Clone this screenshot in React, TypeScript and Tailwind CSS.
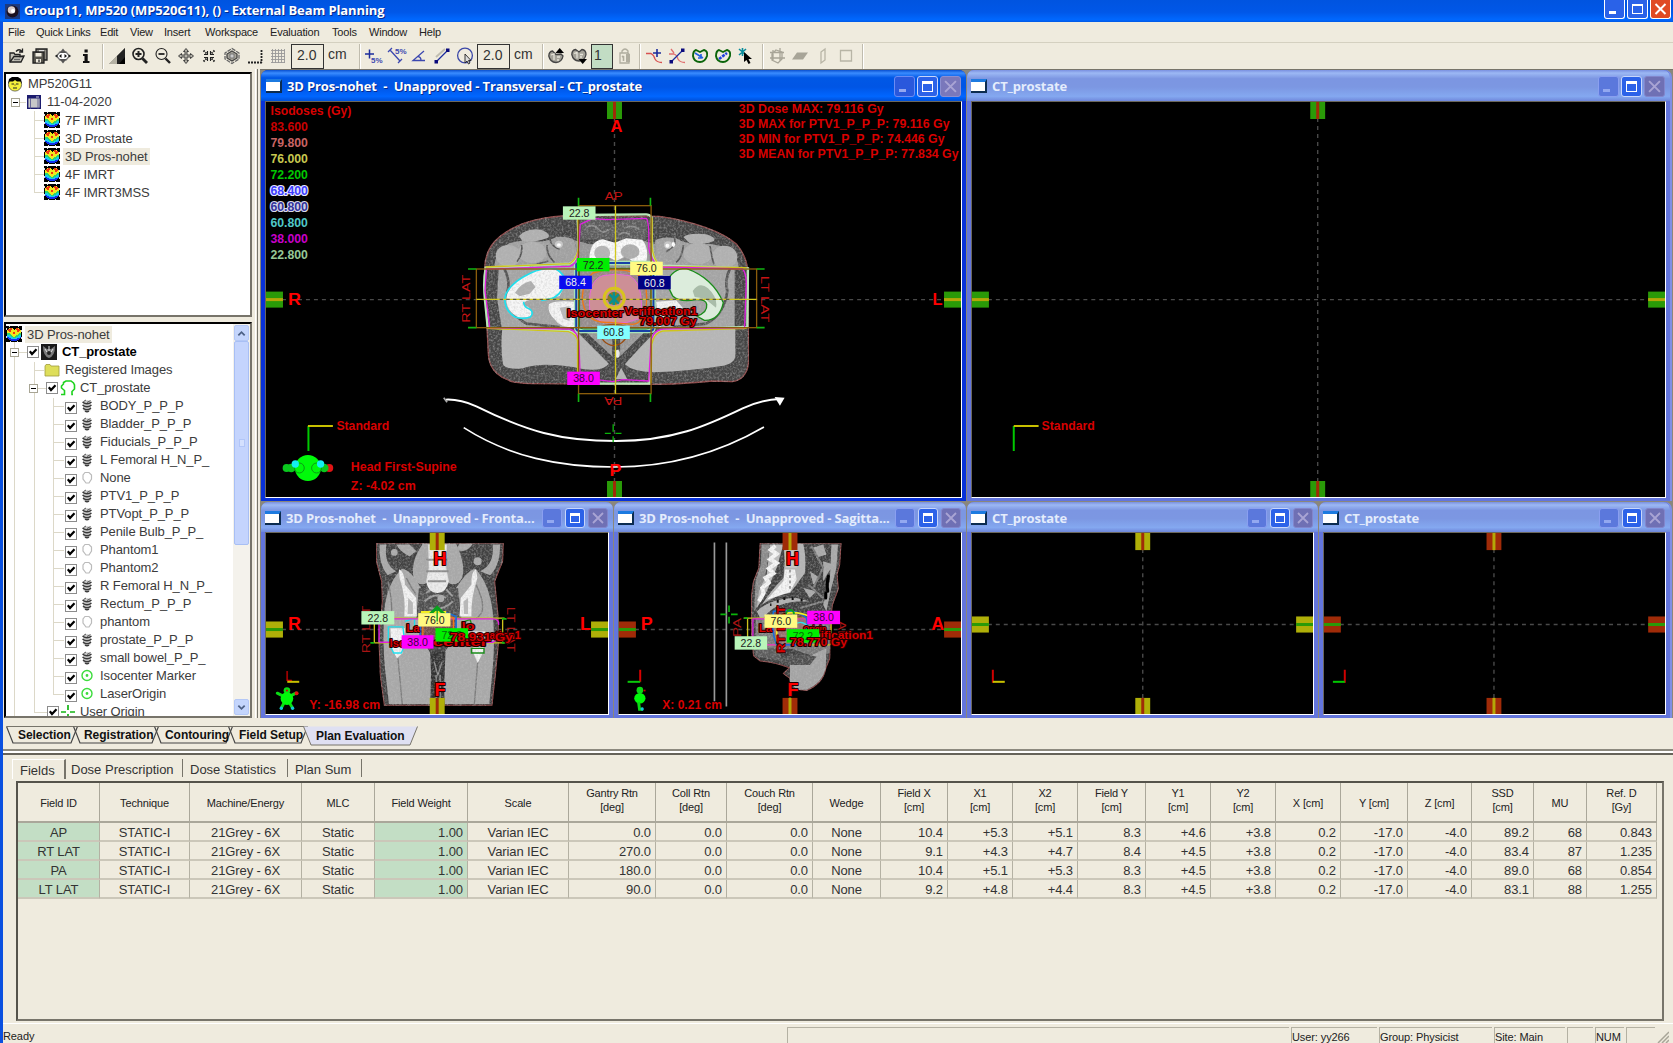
import React from "react";

/* ---------- helpers for the drawings ---------- */

type TProps = { x: number; y: number; t: string; w?: number; s?: number; fill?: string; bold?: boolean; halo?: string; hw?: number; transform?: string };

function T({ x, y, t, w, s = 12, fill = "#d80000", bold = true, halo, hw = 2, transform }: TProps) {
  return (
    <text
      x={x}
      y={y}
      fontSize={s}
      fill={fill}
      fontWeight={bold ? 700 : 400}
      textLength={w}
      lengthAdjust="spacingAndGlyphs"
      stroke={halo}
      strokeWidth={halo ? hw : undefined}
      paintOrder="stroke"
      strokeLinejoin="round"
      transform={transform}
    >
      {t}
    </text>
  );
}

function Tag({ x, y, w = 98, h = 40, bg, fg = "#222", t }: { x: number; y: number; w?: number; h?: number; bg: string; fg?: string; t: string }) {
  return (
    <g>
      <rect x={x} y={y} width={w} height={h} fill={bg} />
      <text x={x + w / 2} y={y + h / 2 + 12} fontSize={34} fill={fg} textAnchor="middle" textLength={62} lengthAdjust="spacingAndGlyphs">
        {t}
      </text>
    </g>
  );
}

/* Shared texture for scanned tissue: `grain` adds fine noise inside a shape, `soft` rounds off tissue edges. */
function TissueFilters() {
  return (
    <defs>
      <filter id="grain" x="0" y="0" width="1" height="1" colorInterpolationFilters="sRGB">
        <feTurbulence type="fractalNoise" baseFrequency="0.16" numOctaves="2" seed="4" result="n" />
        <feColorMatrix in="n" type="matrix" values="0 0 0 0 0.75  0 0 0 0 0.75  0 0 0 0 0.75  1.1 0 0 0 -0.45" result="g" />
        <feComposite in="g" in2="SourceAlpha" operator="in" result="c" />
        <feMerge>
          <feMergeNode in="SourceGraphic" />
          <feMergeNode in="c" />
        </feMerge>
      </filter>
      <filter id="soft">
        <feGaussianBlur stdDeviation="1.8" />
      </filter>
    </defs>
  );
}

const GREEN = "#2a9a08";
const YELLOW = "#afaf08";
const RED = "#a02b08";

type Box = { l: number; t: number; r: number; b: number; cx: number; cy: number };

function Guides({ l, t, r, b, cx, cy }: Box) {
  return (
    <g stroke="#4a4a4a" strokeWidth={1.4} strokeDasharray="4 4">
      <line x1={l} x2={r} y1={cy} y2={cy} />
      <line x1={cx} x2={cx} y1={t} y2={b} />
    </g>
  );
}

function Marks({ l, t, r, b, cx, cy, outer, vIn, hIn }: Box & { outer: string; vIn: string; hIn: string }) {
  return (
    <g>
      <rect x={l} y={cy - 8} width={17} height={16} fill={outer} />
      <rect x={l} y={cy - 1.5} width={17} height={3} fill={hIn} />
      <rect x={r - 17} y={cy - 8} width={17} height={16} fill={outer} />
      <rect x={r - 17} y={cy - 1.5} width={17} height={3} fill={hIn} />
      <rect x={cx - 7.5} y={t} width={15} height={17} fill={outer} />
      <rect x={cx - 1.5} y={t} width={3} height={17} fill={vIn} />
      <rect x={cx - 7.5} y={b - 16} width={15} height={16} fill={outer} />
      <rect x={cx - 1.5} y={b - 16} width={3} height={16} fill={vIn} />
    </g>
  );
}

/* ---------- viewports ---------- */

function Transversal() {
  const box = { l: 266, t: 101, r: 962, b: 496, cx: 615, cy: 298.6 };
  const doses: [string, string, string?][] = [
    ["83.600", "#c80000"],
    ["79.800", "#c86464"],
    ["76.000", "#c8c850"],
    ["72.200", "#00c800"],
    ["68.400", "#3c3cff", "#e8e8ff"],
    ["60.800", "#32329b", "#d8d8e8"],
    ["60.800", "#50c8c8"],
    ["38.000", "#c800c8"],
    ["22.800", "#96c896"],
  ];
  return (
    <svg className="block h-full w-full" viewBox="266 101 696 395" preserveAspectRatio="none" fontFamily="Liberation Sans, Arial, sans-serif">
      <TissueFilters />
      <Guides {...box} />
      <g transform="translate(460 180) scale(.33333)">
        <g filter="url(#grain)">
          {/* body */}
          <path d="M75 262C76 200 112 158 190 128C250 106 310 104 340 103L600 106C700 120 790 152 832 190C862 224 868 262 868 300V540C866 582 842 600 818 602L760 600C700 606 640 612 540 610L220 608C190 608 180 606 168 604C128 596 88 572 86 520L75 300Z" fill="#464646" stroke="#8c4848" strokeWidth={4} />
          <g filter="url(#soft)">
            {/* muscle */}
            <path d="M104 262Q104 210 150 186L200 176Q250 190 290 168Q330 165 345 178L360 260H110ZM838 262Q838 222 800 198L750 188Q690 196 650 172Q610 165 588 178L578 260H836Z" fill="#a0a0a0" />
            <g fill="#b0b0b0">
              <path d="M178 165Q200 140 245 146Q275 158 266 170Q220 186 188 180Z" />
              <path d="M672 168Q690 154 740 160Q770 168 764 180Q720 196 690 186Z" />
              <ellipse cx="146" cy="224" rx="38" ry="32" />
              <ellipse cx="218" cy="214" rx="42" ry="32" />
              <ellipse cx="796" cy="228" rx="38" ry="34" />
              <ellipse cx="716" cy="218" rx="44" ry="32" />
            </g>
            <path d="M118 256H350L360 440H126L112 350Z" fill="#a4a4a4" />
            <path d="M580 256H826V440H570Z" fill="#a4a4a4" />
            <path d="M345 178L390 190L548 178L590 190L585 262L356 262Z" fill="#969696" />
            <path d="M362 120Q420 100 460 130Q520 104 566 120L560 176H366Z" fill="#5c5c5c" />
            <path d="M380 140q20-14 36 4t30 2M500 140q20-10 40 6M480 160q14-10 30 0" fill="none" stroke="#8a8a8a" strokeWidth={5} />
            <g fill="none" stroke="#555" strokeWidth={5}>
              <path d="M186 192Q190 220 172 242M262 192Q262 225 285 244M210 256L266 240M752 195Q756 225 764 250M672 192Q668 230 650 244M276 150Q260 190 300 205M640 160Q660 190 620 212" />
              <path d="M134 262Q152 300 144 330Q138 390 200 428L300 438" strokeWidth={8} />
              <path d="M812 262Q795 300 804 330Q795 400 740 428L640 438" strokeWidth={8} />
            </g>
            {/* gluteal muscles */}
            <path d="M128 440L350 450Q400 500 448 548Q430 572 370 564Q250 540 190 562Q140 568 130 550Q122 500 128 440Z" fill="#b6b6b6" />
            <path d="M828 438L590 450Q540 500 496 550Q520 572 580 574Q700 570 780 556Q830 550 828 520Z" fill="#b6b6b6" />
            <path d="M352 440L462 545M583 440L482 545M470 540V600" stroke="#444" strokeWidth={13} fill="none" />
            <path d="M372 446L458 526V470L420 440ZM563 446L482 526V470L520 440Z" fill="#989898" />
            <path d="M485 560l-16 34h34z" fill="#b4b4b4" />
            <path d="M355 265H585V450H355Z" fill="#968c8c" />
          </g>
          {/* bones */}
          <g filter="url(#soft)">
            <path d="M390 250Q385 180 430 175L466 185L500 172L548 176Q570 200 560 245L535 255L500 225L470 240L440 225L415 255Z" fill="#fafafa" />
            <ellipse cx="428" cy="216" rx="24" ry="22" fill="#b4b4b4" />
            <ellipse cx="512" cy="212" rx="28" ry="22" fill="#acacac" />
            <path d="M140 355Q140 310 220 272Q260 258 290 268Q315 280 320 305L300 345L250 358Q190 352 192 372Q222 380 215 405Q200 412 176 410Q140 390 140 355Z" fill="#f6f6f6" />
            <path d="M166 335Q184 306 214 300L228 318L210 338L180 346Z" fill="#aeaeae" />
            <path d="M268 370Q280 358 345 362V440Q300 440 285 415Q262 395 268 370Z" fill="#f4f4f4" />
            <path d="M300 380L330 376V420L312 414Z" fill="#b8b8b8" />
            <path d="M590 362L650 358L670 380L640 400L600 440Z" fill="#f4f4f4" />
            <path d="M612 380L640 376L620 404Z" fill="#b8b8b8" />
            <ellipse cx="298" cy="190" rx="12" ry="11" fill="#c8c8c8" />
            <ellipse cx="298" cy="192" rx="7" ry="5" fill="#fff" />
            <ellipse cx="626" cy="192" rx="12" ry="11" fill="#c8c8c8" />
            <ellipse cx="624" cy="194" rx="6" ry="6" fill="#fff" />
            <ellipse cx="642" cy="190" rx="5" ry="8" fill="#fff" />
            <ellipse cx="474" cy="518" rx="7" ry="12" fill="#eee" />
          </g>
        </g>
        <path d="M620 305Q640 262 680 262Q760 290 792 365Q780 420 735 418L712 405Q745 395 742 370Q740 355 710 356Q660 365 640 345Z" fill="#dcecdc" stroke="#1a8c1a" strokeWidth={4} />
        <path d="M700 330Q720 300 746 322Q776 350 770 380L745 360Q740 352 706 348Z" fill="#a9bca9" filter="url(#soft)" />
        <path d="M135 355Q140 310 215 275Q255 258 290 264Q316 280 318 305Q300 350 270 354L245 358M192 362Q192 378 210 384Q225 394 212 408Q190 416 166 408Q138 392 135 355" fill="none" stroke="#1fe0ee" strokeWidth={5} />
        {/* target */}
        <path d="M392 400Q380 300 430 284Q470 275 510 284Q540 300 545 350L548 410L500 425H430Z" fill="#cf969f" stroke="#ee66ee" strokeWidth={3} />
        <path d="M368 350Q370 300 400 276Q465 255 530 276Q562 300 562 350Q560 425 520 430L450 424Q375 430 368 350Z" fill="#c0606022" stroke="#f07818" strokeWidth={4} />
        <path d="M415 440Q460 420 510 440Q500 492 462 494Q425 490 415 440Z" fill="none" stroke="#9a4c10" strokeWidth={4} />
        {/* isodose lines */}
        <path d="M350 250Q350 246 362 246H570Q582 246 582 256V440Q582 450 570 450H362Q350 450 350 440Z" fill="none" stroke="#a8e4b8" strokeWidth={14} />
        <path d="M350 250Q350 246 362 246H570Q582 246 582 256V440Q582 450 570 450H362Q350 450 350 440Z" fill="none" stroke="#1840a8" strokeWidth={6} />
        <path d="M360 262H574V438Q570 444 560 444H372Q360 444 360 436Z" fill="none" stroke="#0a8a30" strokeWidth={3} />
        <path d="M354 102L358 200Q352 240 330 248L78 260Q70 300 76 360L84 440L330 450Q352 460 356 480V608L570 608L576 480Q580 452 610 448L864 438L866 262L610 254Q582 250 578 200L576 108Q570 100 560 100Z" fill="none" stroke="#b8e8b8" strokeWidth={7} />
        <path d="M355 110L357 200Q352 236 330 248L78 258M82 442L326 452Q350 458 354 480V606M578 110V200Q584 248 610 256L862 260M862 442L610 450Q584 454 577 490L575 606" fill="none" stroke="#cfc31c" strokeWidth={4} />
        <path d="M362 130L400 112L440 116L560 112Q570 120 568 200Q576 250 610 258L850 264Q864 280 860 330L856 440L610 444Q576 450 574 490L568 600L490 596L460 602L362 590L358 480Q352 450 330 444L90 440L84 390L76 330L80 264L330 256Q356 250 358 200Z" fill="none" stroke="#e020e0" strokeWidth={4} />
        {/* beam apertures */}
        <g fill="none" stroke="#8a5c0c" strokeWidth={4}>
          <rect x="357" y="74" width="218" height="564" />
          <rect x="50" y="264" width="842" height="176" />
        </g>
        <path d="M468 74V638M50 355H892" stroke="#d2c81e" strokeWidth={4} fill="none" />
        <path d="M357 50V74M573 50V74M357 638V663M573 638V663M25 264H50M25 440H50M892 264H916M892 440H916" stroke="#12b412" strokeWidth={5} />
        <path d="M120 355H820" stroke="#444" strokeWidth={3} strokeDasharray="10 10" />
        {/* isocenter */}
        <circle cx="464" cy="352" r="30" fill="none" stroke="#d8c31e" strokeWidth={9} />
        <circle cx="464" cy="352" r="20" fill="#8a7a20" />
        <path d="M450 340l28 28M478 340l-28 28M463 334v38" stroke="#0a9090" strokeWidth={7} />
        <T x={436} y={58} t="AP" w={54} s={33} bold={false} fill="#c81414" />
        <g transform="rotate(180 462 660)">
          <T x={436} y={671} t="PA" w={54} s={33} bold={false} fill="#c81414" />
        </g>
        <T x={0} y={0} t="RT LAT" w={144} s={34} bold={false} fill="#c81414" transform="translate(32 425) rotate(-90)" />
        <T x={0} y={0} t="LT LAT" w={140} s={34} bold={false} fill="#c81414" transform="translate(904 284) rotate(90)" />
        <T x={322} y={407} t="Isocenter" w={170} s={34} halo="#200" hw={6} />
        <T x={494} y={402} t="Verification1" w={220} s={34} halo="#200" hw={6} />
        <T x={540} y={432} t="79.007 Gy" w={172} s={34} halo="#200" hw={6} />
        <Tag x={310} y={76} bg="#b9f5b9" t="22.8" />
        <Tag x={352} y={231} bg="#00ee00" t="72.2" />
        <Tag x={512} y={242} bg="#fffa82" t="76.0" />
        <Tag x={299} y={284} bg="#0a0af0" fg="#eee" t="68.4" />
        <Tag x={536} y={285} bg="#000082" fg="#eee" t="60.8" />
        <Tag x={413} y={434} bg="#82ffff" t="60.8" />
        <Tag x={323} y={572} bg="#ff00ff" fg="#400040" t="38.0" />
        {/* couch */}
        <g fill="none" stroke="#fff" strokeWidth={6}>
          <path d="M-42 656Q0 654 50 676C200 750 300 780 470 780C640 780 740 735 850 682Q910 655 962 654" />
          <path d="M12 740C150 828 300 858 465 858C640 858 790 810 914 738" strokeWidth={5} />
        </g>
        <path d="M946 648L976 650L962 674Z" fill="#fff" />
        <path d="M-48 650l10 14" stroke="#aaa" strokeWidth={5} />
        <path d="M461 730V752M461 766V784M436 757H454M468 757H486" stroke="#0ab40a" strokeWidth={4} />
      </g>
      <Marks {...box} outer={GREEN} vIn={RED} hIn="#b4a808" />
      <T x={611} y={131} t="A" w={12} s={17} fill="#f00" />
      <T x={610} y={475.5} t="P" w={12} s={17} fill="#f00" />
      <T x={288} y={304} t="R" w={13} s={17} fill="#f00" />
      <T x={933.5} y={304} t="L" w={10} s={17} fill="#f00" />
      <T x={270.5} y={114.5} t="Isodoses (Gy)" w={81} s={12} />
      {doses.map(([v, c, h], i) => (
        <T key={i} x={270.5} y={130.5 + i * 16} t={v} w={37.5} s={12} fill={c} halo={h} hw={2.2} />
      ))}
      <T x={739.5} y={112.5} t="3D Dose MAX: 79.116 Gy" w={145} s={12} />
      <T x={739.5} y={127.5} t="3D MAX for PTV1_P_P_P: 79.116 Gy" w={211} s={12} />
      <T x={739.5} y={142.5} t="3D MIN for PTV1_P_P_P: 74.446 Gy" w={206} s={12} />
      <T x={739.5} y={157.5} t="3D MEAN for PTV1_P_P_P: 77.834 Gy" w={220} s={12} />
      <path d="M308.5 450V425" stroke="#00c800" strokeWidth={2} />
      <path d="M308 425H333" stroke="#c8c000" strokeWidth={2} />
      <T x={336.5} y={429} t="Standard" w={53} s={12} />
      <T x={351} y={470} t="Head First-Supine" w={106} s={12} />
      <T x={351} y={489} t="Z: -4.02 cm" w={65} s={12} />
      <g transform="translate(260 90) scale(.33333)">
        <circle cx="80" cy="1131" r="12" fill="#0ac81e" />
        <circle cx="94" cy="1131" r="13" fill="#0ac81e" />
        <circle cx="208" cy="1131" r="12" fill="#e01414" />
        <circle cx="193" cy="1131" r="13" fill="#0ac81e" />
        <circle cx="144" cy="1131" r="39" fill="#00fa0a" />
        <circle cx="118" cy="1131" r="15" fill="none" stroke="#0a9a14" strokeWidth={3} />
        <circle cx="170" cy="1131" r="15" fill="none" stroke="#0a9a14" strokeWidth={3} />
        <circle cx="106" cy="1119" r="11" fill="#14f0f0" />
        <circle cx="182" cy="1119" r="11" fill="#14f0f0" />
      </g>
    </svg>
  );
}

function Frontal() {
  const box = { l: 266, t: 532, r: 609, b: 712, cx: 437.7, cy: 628 };
  return (
    <svg className="block h-full w-full" viewBox="266 532 343 180" preserveAspectRatio="none" fontFamily="Liberation Sans, Arial, sans-serif">
      <Guides {...box} />
      <g transform="translate(260 500) scale(.33333)">
        <g filter="url(#grain)">
          <path d="M350 126H732L730 180L706 240L716 340L718 420L708 520L698 610H374L362 520L358 420L368 300L366 240L350 180Z" fill="#424242" stroke="#8c4848" strokeWidth={3} />
          <g filter="url(#soft)">
            <g fill="#a8a8a8">
              <path d="M360 130H380Q372 190 410 210L384 222Q356 190 360 130Z" />
              <path d="M722 130H700Q706 190 662 210L692 222Q724 190 722 130Z" />
              <path d="M490 128H590Q620 190 608 230Q590 262 560 240H510Q480 262 462 230Q452 180 490 128Z" />
              <path d="M425 204Q380 250 374 330Q368 420 376 500L388 606H512L516 460L480 400L484 260Q450 200 425 204Z" />
              <path d="M650 204Q690 250 700 330Q708 420 700 500L690 606H556L550 460L590 400L590 260Q630 200 650 204Z" />
              <path d="M410 130H450L470 150L450 166Q420 150 410 130ZM640 128H600L590 145Q620 160 640 128Z" />
            </g>
            <path d="M478 260L596 260L606 350H470Z" fill="#505050" />
            <g fill="none" stroke="#9a9a9a" strokeWidth={6}>
              <path d="M495 300Q530 270 560 290M510 320Q550 330 580 300M500 275l20-15M560 265l20 20" />
            </g>
            <circle cx="544" cy="292" r="10" fill="#aaa" />
            <path d="M415 470L428 606M655 480L645 606M440 230Q455 260 470 280M640 250Q620 270 610 290M650 250Q690 330 650 350M385 240Q400 300 395 350" stroke="#7c7c7c" strokeWidth={4} fill="none" />
            <path d="M512 450H558L552 606H518Z" fill="#303030" />
            <path d="M524 480L535 520L548 480M530 520V600M542 520V600" stroke="#8a8a8a" strokeWidth={4} fill="none" />
            <path d="M506 130H562L560 200L568 240Q560 275 535 275Q505 275 500 240L508 200Z" fill="#ececec" />
            <path d="M500 176H565M500 210H568M505 240H560" stroke="#8c8c8c" strokeWidth={6} />
            <path d="M418 204Q435 210 436 250L470 290L472 345H434Q440 290 420 230Z" fill="#f2f2f2" />
            <path d="M650 204Q635 210 636 250L604 290L600 345H636Q634 290 654 230Z" fill="#f2f2f2" />
            <path d="M446 290L460 304V338H444ZM612 300L626 290V338H614Z" fill="#b8b8b8" />
            <path d="M392 380H436L428 455L412 470L396 440Z" fill="#f4f4f4" />
            <path d="M640 390H678L672 450L655 484L640 450Z" fill="#f4f4f4" />
            <circle cx="404" cy="154" r="10" fill="#aaa" />
            <circle cx="655" cy="180" r="12" fill="#aaa" />
          </g>
        </g>
        <path d="M386 376H430L436 430L425 454H402L386 420ZM436 360L465 350V380" fill="none" stroke="#1fe0ee" strokeWidth={4} />
        <path d="M612 362l20-8 6 20-26 8zM636 440H674V454H636Z" fill="none" stroke="#1a8c1a" strokeWidth={4} />
        <path d="M344 350H736M344 424H736M344 350V424M730 350V424" stroke="#cfc31c" strokeWidth={4} fill="none" />
        <path d="M360 352H700Q720 352 718 370M360 422H700L722 410M358 352V422" stroke="#e020e0" strokeWidth={4} fill="none" />
        <path d="M332 352H344M332 424H344M728 352H742M728 424H742" stroke="#12b412" strokeWidth={5} />
        <path d="M482 420V345Q540 320 590 345V420Q540 440 482 420Z" stroke="#1870d8" strokeWidth={5} fill="#c8606055" />
        <path d="M490 410V350Q540 335 582 350V410Q540 430 490 410Z" stroke="#f07818" strokeWidth={4} fill="none" />
        <path d="M484 332H560M560 430H600" stroke="#f4ee20" strokeWidth={6} />
        <path d="M510 340L533 318L556 340" stroke="#0aa01e" strokeWidth={9} fill="none" />
        <T x={0} y={0} t="RT LAT" w={142} s={34} bold={false} fill="#a81414" transform="translate(330 455) rotate(-90)" />
        <T x={0} y={0} t="LT LAT" w={136} s={34} bold={false} fill="#a81414" transform="translate(744 316) rotate(90)" />
        <T x={440} y={390} t="La" w={40} s={34} halo="#200" hw={6} />
        <T x={606} y={386} t="lo" w={40} s={34} halo="#200" hw={6} />
        <T x={390} y={435} t="Iso" w={48} s={34} halo="#200" hw={6} />
        <T x={520} y={434} t="center" w={165} s={30} halo="#200" hw={6} />
        <Tag x={528} y={380} bg="#00ee00" fg="#0a6a0a" t="72.2" />
        <T x={690} y={412} t="ation1" w={94} s={32} halo="#200" hw={6} />
        <T x={572} y={418} t="78.931 Gy" w={188} s={34} halo="#300" hw={6} />
        <Tag x={305} y={329} w={99} bg="#b9f5b9" t="22.8" />
        <Tag x={476} y={335} w={97} bg="#fffa82" t="76.0" />
        <Tag x={426} y={401} w={96} bg="#ff00ff" fg="#400040" t="38.0" />
        <path d="M533 316V360" stroke="#0aa01e" strokeWidth={4} />
        <T x={76} y={538} t="L" w={20} s={42} bold={false} fill="#d80000" />
        <path d="M82 540H118" stroke="#c8c000" strokeWidth={6} />
        <path d="M52 574L80 588L108 574M80 588L64 618M80 588L98 618" stroke="#0adc14" strokeWidth={9} fill="none" strokeLinecap="round" />
        <circle cx="81" cy="566" r="10" fill="#0adc14" />
        <circle cx="81" cy="566" r="3" fill="#c00" />
        <circle cx="81" cy="590" r="19" fill="#00fa0a" />
        <circle cx="110" cy="574" r="6" fill="#e01414" />
        <circle cx="64" cy="619" r="5" fill="#14c8d8" />
        <circle cx="98" cy="619" r="5" fill="#14c8d8" />
      </g>
      <Marks {...box} outer={YELLOW} vIn={RED} hIn={GREEN} />
      <T x={434} y={563.5} t="H" w={13} s={18} fill="#f00" halo="#200" />
      <T x={435} y={694} t="F" w={11} s={18} fill="#f00" halo="#200" />
      <T x={288} y={628.5} t="R" w={13} s={18} fill="#f00" />
      <T x={581} y={628.5} t="L" w={11} s={18} fill="#f00" />
      <T x={309.5} y={707} t="Y: -16.98 cm" w={71} s={12} />
    </svg>
  );
}

function Sagittal() {
  const box = { l: 618, t: 532, r: 962, b: 712, cx: 790, cy: 628 };
  return (
    <svg className="block h-full w-full" viewBox="618 532 344 180" preserveAspectRatio="none" fontFamily="Liberation Sans, Arial, sans-serif">
      <Guides {...box} />
      <g transform="translate(610 500) scale(.33333)">
        <path d="M312 124V598M348 124V614" stroke="#9a9a9a" strokeWidth={5} />
        <g filter="url(#grain)">
          <path d="M450 126H694L690 190L682 220L686 262L668 310L662 360L660 470L648 500Q640 545 590 566L545 560L540 530L520 515L538 498Q490 480 450 478L430 462L424 400V280L430 240L446 200Z" fill="#404040" stroke="#8c4848" strokeWidth={3} />
          <g filter="url(#soft)">
            <path d="M454 130H480L470 200L450 300L432 330L436 240L452 190Z" fill="#8a8a8a" />
            <path d="M480 130L520 130L500 200L470 270L440 320L446 270L470 220Z" fill="#bcbcbc" />
            <path d="M496 134l-14 12 18 12-20 16 20 12-24 16 14 14-24 14 10 14-20 16 4 16-14 24" stroke="#f6f6f6" strokeWidth={12} fill="none" />
            <path d="M522 128H580Q590 170 585 215L560 250L540 275Q500 280 455 310Q480 270 520 230L524 180Z" fill="#b4b4b4" />
            <path d="M525 205H555L560 235L540 272L470 295L520 240Z" fill="#f4f4f4" />
            <path d="M522 128H560V200H526Z" fill="#c8c8c8" />
            <path d="M440 330Q480 290 560 290L600 300L560 300Q490 305 460 350L450 350Z" fill="#b0b0b0" />
            <path d="M610 140L640 130L650 160L620 170ZM665 130H685L680 200L660 280L650 330L640 310L660 240ZM600 210L630 230L610 250ZM640 180L670 190L640 240ZM580 260L620 270L600 290Z" fill="#a8a8a8" />
            <path d="M605 135L640 200L610 260M595 250L640 290M570 320L640 300" stroke="#777" strokeWidth={6} fill="none" />
            <path d="M436 350H660V455L600 460L540 440L436 462Z" fill="#7a7a7a" />
            <path d="M430 440L500 440L520 480L440 464Z" fill="#5c5c5c" />
            <path d="M540 490L650 440L648 500Q636 545 590 564H560L540 540Z" fill="#a4a4a4" />
            <path d="M510 470Q570 450 620 465L600 490H530Z" fill="#505050" />
          </g>
        </g>
        <path d="M656 225Q650 245 654 270M648 275V290" stroke="#000" strokeWidth={9} strokeLinecap="round" />
        <path d="M480 310l4 0M500 300l6 0M520 292l6 0M545 292l6 0M572 296l6 0" stroke="#111" strokeWidth={8} />
        <path d="M540 206V270" stroke="#555" strokeWidth={3} strokeDasharray="8 8" />
        <path d="M400 350H690M412 350V428M412 430H660M664 350V430" stroke="#cfc31c" strokeWidth={4} fill="none" />
        <path d="M428 352V424H470M428 352H600M470 430H600" stroke="#e020e0" strokeWidth={4} fill="none" />
        <path d="M490 330Q560 320 590 350Q600 400 560 430H500Q480 380 490 330Z" fill="#c8606055" stroke="#1870d8" strokeWidth={5} />
        <path d="M500 350Q540 320 600 345M500 360V420" stroke="#f4ee20" strokeWidth={5} fill="none" />
        <circle cx="540" cy="338" r="12" fill="none" stroke="#0aa01e" strokeWidth={6} />
        <path d="M552 370Q580 350 600 385" stroke="#2fe0ee" strokeWidth={4} fill="none" />
        <T x={0} y={0} t="PA" w={56} s={32} bold={false} fill="#a81414" transform="translate(392 406) rotate(-90)" />
        <T x={0} y={0} t="AP" w={56} s={32} bold={false} fill="#a81414" transform="translate(684 358) rotate(90)" />
        <T x={0} y={0} t="RT LAT" w={142} s={32} halo="#200" hw={4} transform="translate(525 455) rotate(-90)" />
        <T x={446} y={390} t="La" w={40} s={34} halo="#200" hw={6} />
        <T x={580} y={392} t="Origin" w={70} s={28} halo="#200" hw={6} />
        <Tag x={530} y={383} w={98} bg="#00ee00" fg="#0a6a0a" t="72.2" />
        <T x={632} y={412} t="ification1" w={158} s={32} halo="#200" hw={6} />
        <T x={540} y={434} t="78.770 Gy" w={172} s={34} halo="#200" hw={6} />
        <Tag x={463} y={339} w={99} bg="#fffa82" t="76.0" />
        <Tag x={592} y={328} w={99} bg="#ff00ff" fg="#400040" t="38.0" />
        <Tag x={373} y={404} w={98} bg="#b9f5b9" t="22.8" />
        <path d="M356 312V332M356 346V366M330 339H348M362 339H382M402 350H412" stroke="#0ab40a" strokeWidth={5} />
        <path d="M88 504V540" stroke="#d80000" strokeWidth={6} />
        <path d="M50 540H88" stroke="#0ac80a" strokeWidth={6} />
        <circle cx="87" cy="565" r="10" fill="#0ad814" />
        <path d="M98 566h6" stroke="#c00" strokeWidth={5} />
        <ellipse cx="87" cy="589" rx="17" ry="16" fill="#00fa0a" />
        <path d="M83 600L86 622H96" stroke="#0ad814" strokeWidth={9} fill="none" />
        <circle cx="94" cy="621" r="5" fill="#14c8d8" />
      </g>
      <Marks {...box} outer={RED} vIn="#b4a808" hIn={GREEN} />
      <T x={786} y={563.5} t="H" w={13} s={18} fill="#f00" halo="#200" />
      <T x={787.5} y={694} t="F" w={11} s={18} fill="#f00" halo="#200" />
      <T x={640} y={628.5} t="P" w={12} s={18} fill="#f00" />
      <T x={932} y={628.5} t="A" w={13} s={18} fill="#f00" />
      <T x={661.5} y={707} t="X: 0.21 cm" w={60} s={12} />
    </svg>
  );
}

function EmptyLarge() {
  const box = { l: 971, t: 101, r: 1668, b: 496, cx: 1318.7, cy: 298.6 };
  return (
    <svg className="block h-full w-full" viewBox="971 101 697 395" preserveAspectRatio="none" fontFamily="Liberation Sans, Arial, sans-serif">
      <Guides {...box} />
      <Marks {...box} outer={GREEN} vIn={RED} hIn="#b4a808" />
      <path d="M1013 450V425" stroke="#00c800" strokeWidth={2} />
      <path d="M1013 425H1038" stroke="#c8c000" strokeWidth={2} />
      <T x={1041} y={429} t="Standard" w={53.5} s={12} />
    </svg>
  );
}

function EmptySmallA() {
  const box = { l: 971, t: 532, r: 1314.5, b: 712, cx: 1143, cy: 623 };
  return (
    <svg className="block h-full w-full" viewBox="971 532 343.5 180" preserveAspectRatio="none">
      <Guides {...box} />
      <Marks {...box} outer={YELLOW} vIn={RED} hIn={GREEN} />
      <path d="M992 668V681" stroke="#d00000" strokeWidth={2} />
      <path d="M992 680H1004" stroke="#c8c000" strokeWidth={2} />
    </svg>
  );
}

function EmptySmallB() {
  const box = { l: 1323, t: 532, r: 1667.5, b: 712, cx: 1494.7, cy: 623 };
  return (
    <svg className="block h-full w-full" viewBox="1323 532 344.5 180" preserveAspectRatio="none">
      <Guides {...box} />
      <Marks {...box} outer={RED} vIn="#b4a808" hIn={GREEN} />
      <path d="M1344 668V681" stroke="#d00000" strokeWidth={2} />
      <path d="M1332 680H1344" stroke="#00c800" strokeWidth={2} />
    </svg>
  );
}

/* ---------- window chrome ---------- */

function WinButtons({ small, active }: { small?: boolean; active?: boolean }) {
  const size = small ? "h-5 w-5" : "h-[21px] w-[21px]";
  return (
    <div className={small ? "mt-px flex gap-[3px]" : "mt-px flex gap-[2px]"}>
      <div className={`${size} flex items-end rounded-[3px] border p-[4px] ${active ? "border-[#6a8cf4] bg-[#2a58dc]" : "border-[#8a9ff0] bg-[#5b78dc]"}`}>
        <div className="h-[3px] w-[7px] bg-[#93a8f0]" />
      </div>
      <div className={`${size} rounded-[3px] border border-[#c8d6fb] bg-[#2c62e8] p-[4px]`}>
        <div className="h-full w-full border border-t-[3px] border-white" />
      </div>
      <div className={`${size} rounded-[3px] border p-[3px] ${active ? "border-[#8c8fd0] bg-[#7a78bb]" : "border-[#8286cc] bg-[#6f70b4]"}`}>
        <svg viewBox="0 0 12 12" className="block h-full w-full">
          <path d="M1 1L11 11M11 1L1 11" stroke="#a9a4d4" strokeWidth={1.8} />
        </svg>
      </div>
    </div>
  );
}

function Win({ title, active, small, className, children }: { title: string; active?: boolean; small?: boolean; className: string; children: React.ReactNode }) {
  return (
    <section className={`${className} flex flex-none flex-col rounded-t-[7px] ${active ? "bg-[#0831d9]" : "bg-[#6375dc]"}`}>
      <header
        className={`flex flex-none items-center rounded-t-[7px] pr-[5px] ${active ? "pl-[5px]" : "pl-[4px]"} ${small ? "h-[30px]" : "h-[31px]"} ${
          active
            ? "bg-[linear-gradient(to_bottom,#0a50d0_0%,#3a8cff_10%,#0058e6_25%,#0055e5_55%,#0066ff_85%,#0050d8_100%)] text-white"
            : "bg-[linear-gradient(to_bottom,#7a90e0_0%,#9cb8f4_10%,#7c96e2_28%,#7c97e2_55%,#84a8f0_85%,#7088dc_100%)] text-[#e4ecfc]"
        }`}
      >
        <div className="mt-px h-[14px] w-4 flex-none border-t-[3px] border-r-2 border-b-2 border-t-[#1c7ae0] border-r-[#0c2c50] border-b-[#0c2c50] bg-white" />
        <h2 className={`mt-[3px] flex-1 overflow-hidden font-['Open_Sans'] text-[13px] font-bold tracking-[-0.15px] whitespace-pre ${active ? "ml-[5px] [text-shadow:1px_1px_0_#062a8c]" : "ml-[5px]"}`}>{title}</h2>
        <WinButtons small={small} active={active} />
      </header>
      <div className="mx-[4px] mb-[3px] min-h-0 flex-1 border-t border-r border-b border-l border-t-[#6b675c] border-r-white border-b-white border-l-[#6b675c] bg-black">{children}</div>
    </section>
  );
}

/* ---------- trees ---------- */

function HeatIcon() {
  return (
    <svg viewBox="0 0 16 16" className="h-4 w-4 flex-none" shapeRendering="crispEdges">
      <rect width="16" height="16" fill="#000" />
      <path d="M0 2h1v2H0zM3 0h1v1H3zM12 0h1v1h-1zM0 10h1v2H0zM15 4h1v2h-1zM15 11h1v2h-1zM4 15h1v1H4zM11 15h1v1h-1z" fill="#ddd" />
      <path d="M1 4L4 2H6L8 4L10 2H12L15 4V8L13 11L8 14L3 11L1 8Z" fill="#f0e820" />
      <path d="M2 5V3H4V2H6V4H5V6H3V5ZM14 5V3H12V2H10V4H11V6H13V5ZM7 6H9V8H7Z" fill="#f03a10" />
      <path d="M1 7H3L5 9L8 11L11 9L13 7H15V9L12 12L8 13L4 12L1 9Z" fill="#28d870" />
      <path d="M1 9H3L5 11L8 12L11 11L13 9H15V11L12 13L8 14L4 13L1 11Z" fill="#18c8f0" />
      <path d="M1 11L4 12L6 13H10L12 12L15 11V12L12 14L10 15H6L4 14L1 12Z" fill="#1030f0" />
    </svg>
  );
}

const Minus = () => (
  <span className="flex h-[9px] w-[9px] flex-none items-center justify-center border border-[#a8a594] bg-white">
    <span className="h-px w-[5px] bg-black" />
  </span>
);

const Check = () => (
  <svg viewBox="0 0 12 12" className="h-3 w-3 flex-none">
    <rect x=".5" y=".5" width="11" height="11" fill="#fff" stroke="#8c8c8c" />
    <path d="M2.800 5.200L5 8L9.500 3.200" fill="none" stroke="#000" strokeWidth={2.200} />
  </svg>
);

function StructIcon({ kind }: { kind: string }) {
  return (
    <svg viewBox="0 0 12 14" className="h-[14px] w-3 flex-none">
      {kind === "seg" && (
        <g>
          <path d="M2 2.500Q6 0 10 2.500V11Q6 14 2 11Z" fill="#c8c8c8" />
          <path d="M1.500 3Q6 6.500 10.500 3M1.500 6Q6 9.500 10.500 6M2 9Q6 12.500 10 9M4 12Q6 13.500 8 12" fill="none" stroke="#3a3a3a" strokeWidth={1.5} />
          <path d="M2.500 2.500L5 1M6 3.500L9.500 1.500" stroke="#555" />
        </g>
      )}
      {kind === "empty" && <path d="M4 1.500H8L10.500 4V8L8 12H5L2 8V4Z" fill="none" stroke="#bbb" strokeWidth={1.2} />}
      {kind === "iso" && (
        <g fill="none" stroke="#3cdc3c" strokeWidth={1.4}>
          <circle cx="6" cy="6.500" r="5" />
          <circle cx="6" cy="6.500" r=".7" />
        </g>
      )}
    </svg>
  );
}

const structures: [string, string][] = [
  ["BODY_P_P_P", "seg"],
  ["Bladder_P_P_P", "seg"],
  ["Fiducials_P_P_P", "seg"],
  ["L Femoral H_N_P_", "seg"],
  ["None", "empty"],
  ["PTV1_P_P_P", "seg"],
  ["PTVopt_P_P_P", "seg"],
  ["Penile Bulb_P_P_", "seg"],
  ["Phantom1", "empty"],
  ["Phantom2", "empty"],
  ["R Femoral H_N_P_", "seg"],
  ["Rectum_P_P_P", "seg"],
  ["phantom", "empty"],
  ["prostate_P_P_P", "seg"],
  ["small bowel_P_P_", "seg"],
  ["Isocenter Marker", "iso"],
  ["LaserOrigin", "iso"],
];

const plans = ["7F IMRT", "3D Prostate", "3D Pros-nohet", "4F IMRT", "4F IMRT3MSS"];

const row = "flex h-[18px] items-center whitespace-nowrap";

function PlanTree() {
  return (
    <div className="h-[245px] flex-none border-2 border-t-black border-r-[#77746a] border-b-[#77746a] border-l-black bg-white pt-px text-[13px] tracking-[-0.1px] text-[#3c3c3c]">
      <div className={`${row} pl-[1px]`}>
        <svg viewBox="0 0 16 16" className="h-4 w-4 flex-none">
          <circle cx="8" cy="8.500" r="6.600" fill="#f4f03c" stroke="#555" strokeWidth={0.8} />
          <path d="M1 8L2 3L5 1H11L14 3L15 8L13.500 5.500H10L8 4L6 5.500H2.500Z" fill="#000" />
          <path d="M4.500 8H7M9 8H11.500M6 12H10" stroke="#222" strokeWidth={1.200} />
          <path d="M8 8V10" stroke="#a09020" />
        </svg>
        <span className="ml-[5px]">MP520G11</span>
      </div>
      <div className={`${row} pl-[5px]`}>
        <Minus />
        <span className="h-px w-[6px] bg-[#dcd8c8]" />
        <svg viewBox="0 0 14 14" className="ml-px h-[14px] w-[14px] flex-none">
          <rect x=".7" y=".7" width="12.600" height="12.600" fill="#c8c8c8" stroke="#1c1c6e" strokeWidth={1.4} />
          <path d="M0 2H14" stroke="#1c1c6e" strokeWidth={3} />
          <path d="M3.500 3V14M11 3V14" stroke="#50508c" strokeWidth={0.800} />
          <path d="M9 2H12" stroke="#ccd" />
        </svg>
        <span className="ml-[6px]">11-04-2020</span>
      </div>
      <div className="relative">
        <div className="absolute top-0 left-[28px] h-[82px] w-px bg-[#dcd8c8]" />
        {plans.map((p) => (
          <div key={p} className={`${row} pl-[28px]`}>
            <span className="h-px w-[10px] bg-[#dcd8c8]" />
            <HeatIcon />
            <span className={`ml-[3px] px-[2px] leading-[17px] ${p === "3D Pros-nohet" ? "bg-[#efebde]" : ""}`}>{p}</span>
          </div>
        ))}
      </div>
    </div>
  );
}

function StructureTree() {
  return (
    <div className="flex h-[396px] flex-none overflow-hidden border-2 border-t-black border-r-[#77746a] border-b-[#77746a] border-l-black bg-white text-[13px] tracking-[-0.1px] text-[#3c3c3c]">
      <div className="relative min-w-0 flex-1 overflow-hidden pt-px">
        <div className="absolute top-[18px] left-[8px] h-[380px] w-px bg-[#dcd8c8]" />
        <div className="absolute top-[38px] left-[28px] h-[351px] w-px bg-[#dcd8c8]" />
        <div className="absolute top-[74px] left-[47px] h-[297px] w-px bg-[#dcd8c8]" />
        <div className="relative">
          <div className={row}>
            <HeatIcon />
            <span className="ml-[3px] bg-[#efebde] px-[2px] leading-[17px]">3D Pros-nohet</span>
          </div>
          <div className={`${row} pl-[4px]`}>
            <Minus />
            <span className="h-px w-[8px] bg-[#dcd8c8]" />
            <Check />
            <svg viewBox="0 0 16 16" className="ml-[2px] h-4 w-4 flex-none">
              <rect width="16" height="16" fill="#1a1a1a" />
              <path d="M2 2Q2 12 8 14Q14 12 14 2L10 5H6Z" fill="#7a7a7a" />
              <path d="M8 2V8M4 5Q8 13 12 5" stroke="#e0e0e0" fill="none" />
              <circle cx="8" cy="9" r="2" fill="#222" />
            </svg>
            <span className="ml-[5px] font-bold text-black">CT_prostate</span>
          </div>
          <div className={`${row} pl-[28px]`}>
            <span className="h-px w-[10px] bg-[#dcd8c8]" />
            <svg viewBox="0 0 16 14" className="h-[14px] w-4 flex-none">
              <path d="M1 3L2 1.500H6L7 3H15V13H1Z" fill="#dede5a" stroke="#a09c3c" strokeWidth={0.8} />
            </svg>
            <span className="ml-[5px]">Registered Images</span>
          </div>
          <div className={`${row} pl-[23px]`}>
            <Minus />
            <span className="h-px w-[8px] bg-[#dcd8c8]" />
            <Check />
            <svg viewBox="0 0 16 16" className="ml-[2px] h-4 w-4 flex-none">
              <path d="M1 14.500H4.500V10.500L1.500 8V6L3.500 4V2.500L6 1H11L13.500 3L14.500 5V9L12 11.500V14.500H13" fill="none" stroke="#1ed21e" strokeWidth={1.6} />
            </svg>
            <span className="ml-[4px]">CT_prostate</span>
          </div>
          {structures.map(([name, kind]) => (
            <div key={name} className={`${row} pl-[47px]`}>
              <span className="h-px w-[11px] flex-none bg-[#dcd8c8]" />
              <span className="mt-[3px] ml-px">
                <Check />
              </span>
              <span className="ml-[4px]">
                <StructIcon kind={kind} />
              </span>
              <span className="ml-[7px]">{name}</span>
            </div>
          ))}
          <div className={`${row} pl-[28px]`}>
            <span className="h-px w-[13px] bg-[#dcd8c8]" />
            <Check />
            <svg viewBox="0 0 14 14" className="ml-[2px] h-[14px] w-[14px] flex-none">
              <path d="M7 0V5M7 9V14M0 7H5M9 7H14" stroke="#14b414" strokeWidth={1.7} />
            </svg>
            <span className="ml-[5px]">User Origin</span>
          </div>
        </div>
      </div>
      <div className="flex w-[17px] flex-none flex-col bg-[#f4f2ec] p-px">
        <div className="flex h-[16px] flex-none items-center justify-center rounded-[2px] border border-[#b4c8f6] bg-[#c4d5fc]">
          <svg viewBox="0 0 10 10" className="h-[9px] w-[9px]">
            <path d="M1.500 7L5 3.500L8.500 7" fill="none" stroke="#4d6185" strokeWidth={2} />
          </svg>
        </div>
        <div className="flex h-[204px] flex-none items-center justify-center rounded-[2px] border border-[#a8bff4] bg-[#c4d4fd]">
          <div className="h-[8px] w-[6px] border border-[#b2c6f8] bg-[#d4e0fe]" />
        </div>
        <div className="flex-1" />
        <div className="flex h-[16px] flex-none items-center justify-center rounded-[2px] border border-[#b4c8f6] bg-[#c4d5fc]">
          <svg viewBox="0 0 10 10" className="h-[9px] w-[9px]">
            <path d="M1.500 3L5 6.500L8.500 3" fill="none" stroke="#4d6185" strokeWidth={2} />
          </svg>
        </div>
      </div>
    </div>
  );
}

/* ---------- toolbar ---------- */

function Ic({ children }: { children: React.ReactNode }) {
  return (
    <div className="flex w-[23px] flex-none justify-center">
      <svg viewBox="0 0 16 16" className="h-4 w-4 overflow-visible" fill="none" stroke="#222" strokeWidth={1.3}>
        {children}
      </svg>
    </div>
  );
}

const Sep = ({ className }: { className: string }) => <div className={`h-[25px] w-[2px] flex-none border-r border-l border-r-white border-l-[#c0bcae] ${className}`} />;

function NumBox({ value, className }: { value: string; className: string }) {
  return <div className={`h-[25px] w-[33px] flex-none border border-[#333] pl-[5px] text-[14px] leading-[20px] ${className}`}>{value}</div>;
}

function Toolbar() {
  return (
    <div className="flex h-[27px] flex-none items-center border-t border-[#d4d0c0] pl-[2px] text-[#333]">
      <Ic>
        <path d="M1 14V5H5L6 6.500H11V8.500L15 8L12 14Z" fill="#c4c2b8" />
        <path d="M1 14L5 8.500H15" />
        <path d="M7 3.500Q10 0 13 3.500M13.500 .5V4H10" />
        <path d="M5 11.500H11" stroke="#666" />
      </Ic>
      <Ic>
        <path d="M4 1H15V12H4Z" fill="#8c8a82" />
        <path d="M1 4H12V15H1Z" fill="#55534c" />
        <path d="M3.500 5H9.500V8.500H3.500ZM4 11H9V14.500H4Z" fill="#efebde" stroke="none" />
        <path d="M7 2H12V3.200H7Z" fill="#ddd" stroke="none" />
        <path d="M7 11.500V14" />
      </Ic>
      <Ic>
        <path d="M5 4H11L14.500 8L11 12H5L1.500 8Z" fill="#fff" stroke="#777" />
        <path d="M8 .5L11.500 5H4.500ZM8 15.500L11.500 11H4.500Z" fill="#555" stroke="none" />
        <path d="M6.500 6L4 8L6.500 10ZM9.500 6L12 8L9.500 10Z" fill="#111" stroke="none" />
        <path d="M2.500 7L1 8L2.500 9M13.500 7L15 8L13.500 9" />
      </Ic>
      <Ic>
        <path d="M6.500 1.500H9.700V4.500H6.500ZM5 6H9.700V13H11.500V15H5V13H6.500V8H5Z" fill="#111" stroke="none" />
      </Ic>
      <Sep className="ml-[5px]" />
      <div className="w-px" />
      <Ic>
        <path d="M16 0V16H0Z" fill="#77756c" stroke="none" />
        <path d="M16 0V16H8V8Z" fill="#222" stroke="none" />
        <path d="M0 16L8 8V16Z" fill="#b4b1a4" stroke="none" />
        <path d="M16 9V16H10Z" fill="#000" stroke="none" />
      </Ic>
      <Ic>
        <circle cx="6.500" cy="6" r="5.500" strokeWidth={1.600} />
        <path d="M6.500 3V9M3.500 6H9.500" strokeWidth={2} />
        <path d="M10.500 10.500L15 15" strokeWidth={2.800} />
      </Ic>
      <Ic>
        <circle cx="6.500" cy="6" r="5.500" strokeWidth={1.100} />
        <path d="M3.500 6H9.500" strokeWidth={1.800} />
        <path d="M10.500 10.500L15 15" strokeWidth={2.400} />
      </Ic>
      <Ic>
        <path d="M8 .5L10.500 3.500H9V7H12.500V5.500L15.500 8L12.500 10.500V9H9V12.500H10.500L8 15.500L5.500 12.500H7V9H3.500V10.500L.5 8L3.500 5.500V7H7V3.500H5.500Z" fill="#b4b2a8" stroke="#333" strokeWidth={0.9} />
      </Ic>
      <Ic>
        <path d="M2.500 2.500L6 6M13.500 2.500L10 6M2.500 13.500L6 10M13.500 13.500L10 10" strokeDasharray="1.600 1" strokeWidth={1.800} />
        <path d="M6.500 3V6.500H3M9.500 3V6.500H13M6.500 13V9.500H3M9.500 13V9.500H13" strokeWidth={1.100} />
      </Ic>
      <Ic>
        <path d="M8 0.500L15 5V11L8 15.500L1 11V5Z" stroke="#666" strokeDasharray="4 1" />
        <path d="M8 3L13 6V10L8 13L3 10V6Z" fill="#a8a69c" stroke="#444" />
        <path d="M6 6H10V10H6Z" fill="#ccc" stroke="#666" strokeWidth={0.800} />
      </Ic>
      <Ic>
        <path d="M1 14.500H15M14.500 2V14.500" strokeDasharray="2 1" strokeWidth={1.800} />
      </Ic>
      <Ic>
        <path d="M2.500 1V15M5.500 1V15M8.500 1V15M11.500 1V15M14.500 1V15M1 2.500H15M1 5.500H15M1 8.500H15M1 11.500H15M1 14.500H15" stroke="#999" strokeWidth={0.900} />
      </Ic>
      <NumBox value="2.0" className="ml-[2px]" />
      <span className="w-[35px] flex-none pb-[4px] pl-[4px] text-[14px] leading-[18px]">cm</span>
      <Sep className="" />
      <Ic>
        <path d="M0 6H9M4.500 1.500V10.500" stroke="#1c2c9c" strokeWidth={1.500} />
        <text x="6" y="14.500" fontSize="8" fontWeight="700" fill="#3c48b0" stroke="none">5%</text>
      </Ic>
      <Ic>
        <path d="M2 2L12 13M0 4L4 0M10 15L14 11" stroke="#3c48b0" />
        <text x="7" y="6" fontSize="8" fontWeight="700" fill="#3c48b0" stroke="none">5%</text>
      </Ic>
      <Ic>
        <path d="M13 3L2 12.500H14M7 8.500Q10 9 10 12.500" stroke="#3c48b0" />
      </Ic>
      <Ic>
        <path d="M2 9L11 1" stroke="#c0bdb0" strokeWidth={2} />
        <path d="M2 14L14 2" stroke="#1c2c9c" />
        <path d="M.5 12H4V15.500H.5ZM12 .5H15.500V4H12Z" fill="#0a0a7c" stroke="none" />
      </Ic>
      <Ic>
        <circle cx="8" cy="7.500" r="7.400" stroke="#3c48a8" />
        <path d="M8 6V15L10 13L11.500 16L13 15L11.500 12.500H14Z" fill="#ddd" stroke="#222" strokeWidth={0.900} />
      </Ic>
      <NumBox value="2.0" className="ml-px" />
      <span className="w-[32px] flex-none pb-[4px] pl-[4px] text-[14px] leading-[18px]">cm</span>
      <Sep className="" />
      <Ic>
        <path d="M4.500 3Q1 3.500 .8 8Q2 14 8 14.500Q14 14 15 8L13 6L8 6.500Z" fill="#a4a298" stroke="#444" />
        <path d="M3 7L6 6V12M9 9H12M9 12H11" stroke="#e4e2d8" />
        <path d="M7.500 5L11.700 0L16 5Z" fill="#000" stroke="none" />
      </Ic>
      <Ic>
        <path d="M4.500 1.500Q1 2 .8 6.500Q2 12.500 8 13Q14 12.500 15 6.500Q15 2 11 1.500L8 4Z" fill="#a4a298" stroke="#444" />
        <path d="M3 5.500L6 4.500V10.500M9 6.500H12M9 9H11" stroke="#e4e2d8" />
        <path d="M7.500 11L11.700 16L16 11Z" fill="#000" stroke="none" />
      </Ic>
      <div className="ml-px h-[25px] w-[22px] flex-none border border-[#333] bg-[#c2ddc4] pl-[2px] text-[14px] leading-[20px]">1</div>
      <Ic>
        <path d="M3 5H10Q12 5 12 7V15H3ZM5 5V3Q8 -1 11 3V6" stroke="#b0ad9f" />
        <path d="M9 6H13V14H9Z" fill="#b0ad9f" stroke="none" />
        <path d="M6.500 8V13M5 9L6.500 8" stroke="#b0ad9f" strokeWidth={1.600} />
      </Ic>
      <Sep className="ml-[3px]" />
      <div className="w-px" />
      <Ic>
        <path d="M0 5.500H5Q8 7 9 11Q11 14.500 16 14.500" stroke="#d85050" />
        <path d="M11 1V9M7 5H15" stroke="#1c2c9c" strokeWidth={1.600} />
      </Ic>
      <Ic>
        <path d="M0 6H5Q8 7 9 11Q11 14.500 16 14.500M2 1L5 5" stroke="#e07070" />
        <path d="M2 14L14 2" stroke="#1c2c9c" />
        <path d="M.5 12H4V15.500H.5ZM12 .5H15.500V4H12Z" fill="#0a0a7c" stroke="none" />
      </Ic>
      <Ic>
        <path d="M4 2L8 4L12 2Q16 3 15 8Q13 14 8 14Q2 14 1 8Q1 3 4 2Z" stroke="#0a640a" strokeWidth={1.900} />
        <path d="M3 5L11 10M9 6V10H6" stroke="#2060e0" strokeWidth={1.600} />
      </Ic>
      <Ic>
        <path d="M4 2L8 4L12 2Q16 3 15 8Q13 14 8 14Q2 14 1 8Q1 3 4 2Z" stroke="#0a640a" strokeWidth={1.900} />
        <path d="M4 11L12 5" stroke="#2040e0" strokeWidth={2.600} strokeDasharray="3 1" />
      </Ic>
      <Ic>
        <path d="M1 1L8 7M8 1L1 7M4.500 0V8" stroke="#0a8c9c" strokeWidth={1.600} />
        <path d="M6 4V14L8.500 12L10.500 16L12.500 15L10.500 11H14Z" fill="#000" stroke="none" />
      </Ic>
      <Sep className="ml-[5px]" />
      <div className="w-px" />
      <Ic>
        <g stroke="#a8a598">
          <path d="M4 2V13M11 0V13M1 4.500H15M1 10H16M7 2L13 4V11L9 15L3 12V6Z" />
        </g>
      </Ic>
      <Ic>
        <path d="M5 4.500H16L11 11.500H0Z" fill="#a8a598" stroke="none" />
      </Ic>
      <Ic>
        <path d="M6 4L10 1V12L6 15Z" stroke="#b8b5a6" />
      </Ic>
      <Ic>
        <path d="M2.500 2.500H13.500V13H2.500Z" stroke="#b8b5a6" />
      </Ic>
      <Sep className="ml-[5px]" />
    </div>
  );
}

/* ---------- bottom area ---------- */

const workTabs: { label: string; w: number; cls: string }[] = [
  { label: "Selection", w: 72, cls: "w-[72px] pl-[12px]" },
  { label: "Registration", w: 86, cls: "w-[86px] pl-[11px]" },
  { label: "Contouring", w: 79, cls: "w-[79px] pl-[11px]" },
  { label: "Field Setup", w: 80, cls: "w-[80px] pl-[11px]" },
];

function WorkspaceTabs() {
  return (
    <div className="flex h-[31px] flex-none items-start pt-[8px] pl-[3px] text-[12px] font-bold tracking-[-0.05px] text-[#111]">
      {workTabs.map(({ label, w, cls }) => (
        <div key={label} className={`relative -mr-[5px] h-[18px] flex-none leading-[18px] whitespace-nowrap ${cls}`}>
          <svg className="absolute inset-0 h-full w-full" viewBox={`0 0 ${w} 18`}>
            <path d={`M.5 .5L7 17H${w - 7}L${w - 0.5} .5`} fill="none" stroke="#444" strokeWidth={1.2} />
            <path d={`M.5 .5H${w}`} stroke="#77746a" strokeWidth={1} />
          </svg>
          <span className="relative">{label}</span>
        </div>
      ))}
      <div className="relative h-[20px] w-[115px] flex-none pl-[13px] leading-[21px] whitespace-nowrap">
        <svg className="absolute inset-0 h-full w-full" viewBox="0 0 115 20">
          <path d="M.5 .5L8 19H107L114.500 .5Z" fill="#dfe0f2" />
          <path d="M.5 .5L8 19H107L114.500 .5" fill="none" stroke="#77746a" />
        </svg>
        <span className="relative">Plan Evaluation</span>
      </div>
    </div>
  );
}

const columns: [string, string?][] = [
  ["Field ID"], ["Technique"], ["Machine/Energy"], ["MLC"], ["Field Weight"], ["Scale"],
  ["Gantry Rtn", "[deg]"], ["Coll Rtn", "[deg]"], ["Couch Rtn", "[deg]"], ["Wedge"],
  ["Field X", "[cm]"], ["X1", "[cm]"], ["X2", "[cm]"], ["Field Y", "[cm]"], ["Y1", "[cm]"], ["Y2", "[cm]"],
  ["X [cm]"], ["Y [cm]"], ["Z [cm]"], ["SSD", "[cm]"], ["MU"], ["Ref. D", "[Gy]"],
];

const colGrid =
  "grid grid-cols-[82px_90px_112px_73px_93px_101px_87px_71px_86px_68px_67px_65px_65px_68px_65px_65px_65px_67px_64px_62px_53px_70px]";

const rows = [
  ["AP", "STATIC-I", "21Grey - 6X", "Static", "1.00", "Varian IEC", "0.0", "0.0", "0.0", "None", "10.4", "+5.3", "+5.1", "8.3", "+4.6", "+3.8", "0.2", "-17.0", "-4.0", "89.2", "68", "0.843"],
  ["RT LAT", "STATIC-I", "21Grey - 6X", "Static", "1.00", "Varian IEC", "270.0", "0.0", "0.0", "None", "9.1", "+4.3", "+4.7", "8.4", "+4.5", "+3.8", "0.2", "-17.0", "-4.0", "83.4", "87", "1.235"],
  ["PA", "STATIC-I", "21Grey - 6X", "Static", "1.00", "Varian IEC", "180.0", "0.0", "0.0", "None", "10.4", "+5.1", "+5.3", "8.3", "+4.5", "+3.8", "0.2", "-17.0", "-4.0", "89.0", "68", "0.854"],
  ["LT LAT", "STATIC-I", "21Grey - 6X", "Static", "1.00", "Varian IEC", "90.0", "0.0", "0.0", "None", "9.2", "+4.8", "+4.4", "8.3", "+4.5", "+3.8", "0.2", "-17.0", "-4.0", "83.1", "88", "1.255"],
];

const centered = [0, 1, 2, 3, 5, 9];

function FieldsTable() {
  return (
    <div className="ml-[13px] h-[240px] w-[1648px] flex-none border-2 border-t-[#55534b] border-r-[#77746a] border-b-[#77746a] border-l-[#55534b]">
      <div className={`${colGrid} h-[40px] text-[11px] tracking-[-0.15px] text-[#222]`}>
        {columns.map(([a, b], i) => (
          <div key={i} className={`flex flex-col items-center border-r border-b-2 border-r-[#aaa79a] border-b-[#aaa79a] leading-[14px] ${b ? "pt-[3px]" : "justify-center pt-[2px]"}`}>
            <span>{a}</span>
            {b && <span>{b}</span>}
          </div>
        ))}
      </div>
      {rows.map((r, ri) => (
        <div key={ri} className={`${colGrid} h-[19px] text-[13px] tracking-[-0.1px] text-[#333]`}>
          {r.map((c, i) => (
            <div
              key={i}
              className={`h-[19px] border-r border-b-2 border-r-[#b4b1a3] border-b-[#cbc7b9] leading-[20px] whitespace-nowrap ${centered.includes(i) ? "text-center" : "pr-[4px] text-right"} ${i === 0 || i === 4 ? "bg-[#c3dec5]" : ""}`}
            >
              {c}
            </div>
          ))}
        </div>
      ))}
    </div>
  );
}

function StatusBar() {
  const pane = "h-[16px] flex-none border-t border-l border-[#b4b1a3] mr-[2px] leading-[18px] overflow-hidden whitespace-nowrap";
  return (
    <div className="mt-[2px] flex h-[20px] flex-none items-end border-t border-[#fff] text-[11px] tracking-[-0.1px] text-[#222]">
      <span className="w-[784px] leading-[14px]">Ready</span>
      <div className={`${pane} w-[502px]`} />
      <div className={`${pane} w-[86px]`}>User: yy266</div>
      <div className={`${pane} w-[113px]`}>Group: Physicist</div>
      <div className={`${pane} w-[71px]`}>Site: Main</div>
      <div className={`${pane} w-[26px]`} />
      <div className={`${pane} w-[29px]`}>NUM</div>
      <div className={`${pane} w-[29px]`} />
      <svg viewBox="0 0 12 12" className="h-[12px] w-[12px]">
        <path d="M12 1L1 12M12 5L5 12M12 9L9 12" stroke="#a8a598" strokeWidth={1.500} />
      </svg>
    </div>
  );
}

const menus: [string, string][] = [
  ["File", "w-[28px]"], ["Quick Links", "w-[64px]"], ["Edit", "w-[30px]"], ["View", "w-[34px]"], ["Insert", "w-[41px]"],
  ["Workspace", "w-[65px]"], ["Evaluation", "w-[62px]"], ["Tools", "w-[37px]"], ["Window", "w-[50px]"], ["Help", "w-[40px]"],
];

export default function App() {
  return (
    <div className="flex h-[1043px] w-[1673px] flex-col overflow-hidden bg-[#efebde] font-['Liberation_Sans',Arial,sans-serif]">
      <header className="flex h-[22px] flex-none items-center justify-between bg-[linear-gradient(to_bottom,#0054e0,#0057e8_55%,#0068ff_90%,#0058e4)] pl-[5px]">
        <div className="flex items-center">
          <svg viewBox="0 0 15 15" className="h-[15px] w-[15px]">
            <rect width="15" height="15" fill="#1c3a80" />
            <circle cx="7.500" cy="7.500" r="6" fill="#1a1020" />
            <circle cx="6.500" cy="6" r="3.800" fill="#d8cccc" />
            <circle cx="8" cy="7" r="2" fill="#fff" />
          </svg>
          <h1 className="ml-[4px] pb-[2px] font-['Open_Sans'] text-[13px] leading-[18px] font-bold tracking-[-0.1px] whitespace-pre text-white [text-shadow:1px_1px_0_#062a8c]">
            Group11, MP520 (MP520G11), () - External Beam Planning
          </h1>
        </div>
        <div className="flex h-full items-start gap-[2px] pr-[2px]">
          <div className="flex h-[19px] w-[21px] items-end rounded-b-[3px] border border-t-0 border-white bg-[#2a62e8] p-[4px]">
            <div className="h-[3px] w-[7px] bg-white" />
          </div>
          <div className="h-[19px] w-[21px] rounded-b-[3px] border border-t-0 border-white bg-[#2a62e8] p-[4px]">
            <div className="h-full w-full border border-t-2 border-white" />
          </div>
          <div className="h-[19px] w-[21px] rounded-b-[3px] border border-t-0 border-white bg-[#e04a24] p-[3px]">
            <svg viewBox="0 0 12 12" className="block h-full w-full">
              <path d="M1 1L11 11M11 1L1 11" stroke="#fff" strokeWidth={2} />
            </svg>
          </div>
        </div>
      </header>
      <div className="flex min-h-0 flex-1 flex-col border-l-[3px] border-[#0a50e0]">
        <nav className="flex h-[20px] flex-none items-center pl-[5px] text-[11px] tracking-[-0.2px] text-[#222]">
          {menus.map(([m, w]) => (
            <span key={m} className={`${w} flex-none whitespace-nowrap`}>{m}</span>
          ))}
        </nav>
        <Toolbar />
        <div className="flex h-[649px] flex-none">
          <aside className="flex w-[250px] flex-none flex-col gap-[5px] pt-[3px] pr-px pl-px">
            <PlanTree />
            <StructureTree />
          </aside>
          <div className="ml-[2px] w-[3px] flex-none border-r border-l border-r-[#77746a] border-l-white" />
          <main className="ml-[2px] flex min-w-0 flex-1 flex-col gap-px border-t border-[#77746a] bg-[#8a877c] pl-px">
            <div className="flex gap-px">
              <Win title="3D Pros-nohet  -  Unapproved - Transversal - CT_prostate" active className="h-[431px] w-[705px]">
                <Transversal />
              </Win>
              <Win title="CT_prostate" className="h-[431px] w-[705px] border-r-2 border-[#7f8fe4]">
                <EmptyLarge />
              </Win>
            </div>
            <div className="flex gap-px">
              <Win small title="3D Pros-nohet  -  Unapproved - Fronta..." className="h-[216px] w-[352px]">
                <Frontal />
              </Win>
              <Win small title="3D Pros-nohet  -  Unapproved - Sagitta..." className="h-[216px] w-[352px]">
                <Sagittal />
              </Win>
              <Win small title="CT_prostate" className="h-[216px] w-[351px]">
                <EmptySmallA />
              </Win>
              <Win small title="CT_prostate" className="h-[216px] w-[353px] border-r-2 border-[#7f8fe4]">
                <EmptySmallB />
              </Win>
            </div>
          </main>
        </div>
        <WorkspaceTabs />
        <div className="flex h-[6px] flex-none flex-col justify-between border-t-2 border-b-2 border-t-[#8c897e] border-b-[#66635a] bg-white" />
        <div className="flex h-[26px] flex-none items-start pt-[4px] pl-[9px] text-[13px] text-[#333]">
          <span className="h-[20px] w-[54px] border-t border-r-2 border-l border-t-white border-r-[#77746a] border-l-white pl-[7px] leading-[21px]">Fields</span>
          <span className="h-[18px] w-[117px] border-r border-[#77746a] pl-[5px] leading-[22px] whitespace-nowrap">Dose Prescription</span>
          <span className="h-[18px] w-[105px] border-r border-[#77746a] pl-[7px] leading-[22px] whitespace-nowrap">Dose Statistics</span>
          <span className="h-[18px] w-[74px] border-r border-[#77746a] pl-[7px] leading-[22px] whitespace-nowrap">Plan Sum</span>
        </div>
        <FieldsTable />
        <StatusBar />
      </div>
    </div>
  );
}
